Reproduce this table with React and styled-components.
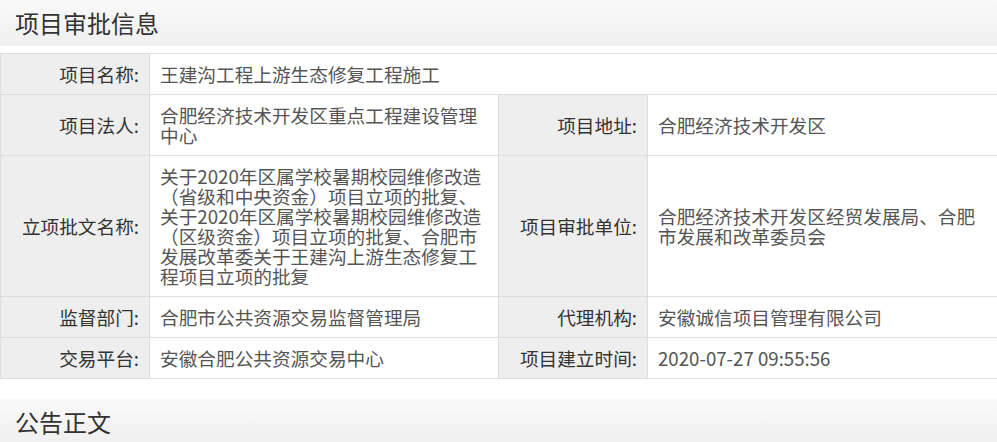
import styled, { createGlobalStyle } from "styled-components";

const GlobalStyle = createGlobalStyle`
  body {
    margin: 0;
    background: #fff;
    font-family: "Microsoft YaHei", "Noto Sans CJK SC", "Noto Sans", sans-serif;
  }
`;

const Page = styled.div`
  width: 997px;
  display: flex;
  flex-direction: column;
`;

const SectionHeader = styled.div`
  height: 46px;
  display: flex;
  align-items: center;
  padding-left: 15px;
  background: linear-gradient(to bottom, #f9f9f9, #efefef);
  margin-top: ${(p) => p.$gap || 0}px;
`;

const SectionTitle = styled.h2`
  margin: 0;
  font-size: 24px;
  font-weight: 400;
  line-height: 28px;
  color: #333;
`;

const InfoTable = styled.table`
  width: 997px;
  margin-top: 7px;
  border-collapse: collapse;
  table-layout: fixed;
  font-size: 18.67px;
  line-height: 20px;
`;

const Row = styled.tr``;

const Label = styled.th`
  background: #eeeeee;
  border: 1px solid #dddddd;
  padding: 10px 10px 10px 0;
  text-align: right;
  font-weight: 400;
  color: #333;
  vertical-align: middle;
  white-space: nowrap;
`;

const Value = styled.td`
  border: 1px solid #dddddd;
  padding: 10px 8px 10px 10px;
  text-align: left;
  color: #555;
  vertical-align: middle;
  word-break: break-all;
`;

const Col = styled.col`
  width: ${(p) => p.$w}px;
`;

const rows = [
  [["项目名称", "王建沟工程上游生态修复工程施工"]],
  [
    ["项目法人", "合肥经济技术开发区重点工程建设管理中心"],
    ["项目地址", "合肥经济技术开发区"],
  ],
  [
    [
      "立项批文名称",
      "关于2020年区属学校暑期校园维修改造（省级和中央资金）项目立项的批复、关于2020年区属学校暑期校园维修改造（区级资金）项目立项的批复、合肥市发展改革委关于王建沟上游生态修复工程项目立项的批复",
    ],
    ["项目审批单位", "合肥经济技术开发区经贸发展局、合肥市发展和改革委员会"],
  ],
  [
    ["监督部门", "合肥市公共资源交易监督管理局"],
    ["代理机构", "安徽诚信项目管理有限公司"],
  ],
  [
    ["交易平台", "安徽合肥公共资源交易中心"],
    ["项目建立时间", "2020-07-27 09:55:56"],
  ],
];

export default function App() {
  return (
    <Page>
      <GlobalStyle />
      <SectionHeader>
        <SectionTitle>项目审批信息</SectionTitle>
      </SectionHeader>
      <InfoTable>
        <colgroup>
          <Col $w={149} />
          <Col $w={349} />
          <Col $w={149} />
          <Col $w={350} />
        </colgroup>
        <tbody>
          {rows.map((cells, i) => (
            <Row key={i}>
              {cells.map(([label, value]) => [
                <Label key={label + "l"}>{label}:</Label>,
                <Value key={label + "v"} colSpan={cells.length === 1 ? 3 : 1}>
                  {value}
                </Value>,
              ])}
            </Row>
          ))}
        </tbody>
      </InfoTable>
      <SectionHeader $gap={20}>
        <SectionTitle>公告正文</SectionTitle>
      </SectionHeader>
    </Page>
  );
}
